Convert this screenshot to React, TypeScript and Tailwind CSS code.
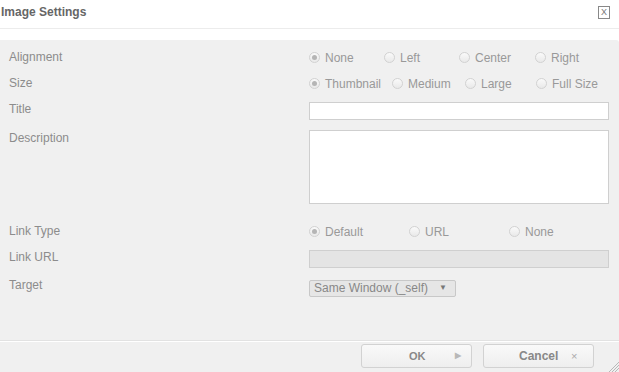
import React from "react";

const font = { fontFamily: '"Liberation Sans", Arial, sans-serif' };

function Radio({ label, checked, width }: { label: string; checked?: boolean; width: string }) {
  return (
    <label className={`flex items-center ${width}`}>
      <span className="w-[11px] h-[11px] rounded-full border border-[#d2d2d2] bg-gradient-to-b from-[#fafafa] to-[#e9e9e9] flex items-center justify-center">
        {checked && <span className="w-[5px] h-[5px] rounded-full bg-[#b5b5b5]" />}
      </span>
      <span className="ml-[5px] text-[12px] text-[#999] relative top-[1px]">{label}</span>
    </label>
  );
}

function Label({ children }: { children: React.ReactNode }) {
  return <div className="w-[309px] pl-[9px] text-[12px] text-[#8c8c8c] shrink-0">{children}</div>;
}

export default function App() {
  return (
    <div className="w-[619px] h-[372px] bg-white flex flex-col overflow-hidden" style={font}>
      {/* header */}
      <div className="h-[29px] flex items-center justify-between pl-[1px] pr-[9px] border-b border-[#ececec]">
        <h1 className="text-[12px] font-bold text-[#666] leading-none mt-[-5px]">Image Settings</h1>
        <div className="w-[12px] h-[13px] border border-[#888] text-[9px] leading-none text-[#777] flex items-center justify-center mt-[-4px]">
          X
        </div>
      </div>
      <div className="h-[11px] bg-white" />

      {/* body */}
      <div className="flex-1 bg-[#f0f0f0] rounded-tr-[3px] flex flex-col pt-[4px]">
        <div className="flex items-center h-[26px]">
          <Label>Alignment</Label>
          <Radio label="None" checked width="w-[75px]" />
          <Radio label="Left" width="w-[75px]" />
          <Radio label="Center" width="w-[76px]" />
          <Radio label="Right" width="w-[70px]" />
        </div>
        <div className="flex items-center h-[26px]">
          <Label>Size</Label>
          <Radio label="Thumbnail" checked width="w-[83px]" />
          <Radio label="Medium" width="w-[73px]" />
          <Radio label="Large" width="w-[71px]" />
          <Radio label="Full Size" width="w-[70px]" />
        </div>
        <div className="flex items-center mt-[6px]">
          <Label>
            <span className="relative top-[-2px]">Title</span>
          </Label>
          <div className="w-[300px] h-[18px] bg-white border border-[#cfcfcf]" />
        </div>
        <div className="flex items-start mt-[10px]">
          <Label>
            <span className="relative top-[-1px]">Description</span>
          </Label>
          <div className="w-[300px] h-[74px] bg-white border border-[#cfcfcf]" />
        </div>
        <div className="flex items-center h-[26px] mt-[14px]">
          <Label>Link Type</Label>
          <Radio label="Default" checked width="w-[100px]" />
          <Radio label="URL" width="w-[100px]" />
          <Radio label="None" width="w-[60px]" />
        </div>
        <div className="flex items-center mt-[6px]">
          <Label>
            <span className="relative top-[-2px]">Link URL</span>
          </Label>
          <div className="w-[300px] h-[18px] bg-[#e4e4e4] border border-[#cfcfcf]" />
        </div>
        <div className="flex items-center mt-[11px]">
          <Label>
            <span className="relative top-[-3px]">Target</span>
          </Label>
          <div className="w-[147px] h-[17px] bg-[#e6e6e6] border border-[#c8c8c8] rounded-[2px] flex items-center justify-between pl-[4px] pr-[8px] text-[12px] text-[#888]">
            <span>Same Window (_self)</span>
            <span className="text-[8px] text-[#777]">▼</span>
          </div>
        </div>

        {/* footer */}
        <div className="mt-auto border-t border-[#e2e2e2]">
          <div className="relative border-t border-white h-[31px] flex justify-end items-start pt-[2px] pr-[25px] gap-[11px]">
            <div className="w-[111px] h-[24px] rounded-[3px] border border-[#d2d2d2] bg-gradient-to-b from-[#f9f9f9] to-[#eeeeee] flex items-center text-[11px] font-bold text-[#888]">
              <span className="ml-[47px] w-[46px]">OK</span>
              <span className="text-[8px] text-[#b8b8b8]">▶</span>
            </div>
            <div className="w-[111px] h-[24px] rounded-[3px] border border-[#d2d2d2] bg-gradient-to-b from-[#f9f9f9] to-[#eeeeee] flex items-center text-[12px] font-bold text-[#888]">
              <span className="ml-[35px] w-[52px]">Cancel</span>
              <span className="text-[11px] font-normal text-[#aaa]">×</span>
            </div>
            <svg className="absolute right-0 bottom-0" width="12" height="12" viewBox="0 0 12 12">
              <path d="M12 2 L2 12 M12 5 L5 12 M12 8 L8 12" stroke="#b8b8b8" strokeWidth="1" />
            </svg>
          </div>
        </div>
      </div>
    </div>
  );
}
